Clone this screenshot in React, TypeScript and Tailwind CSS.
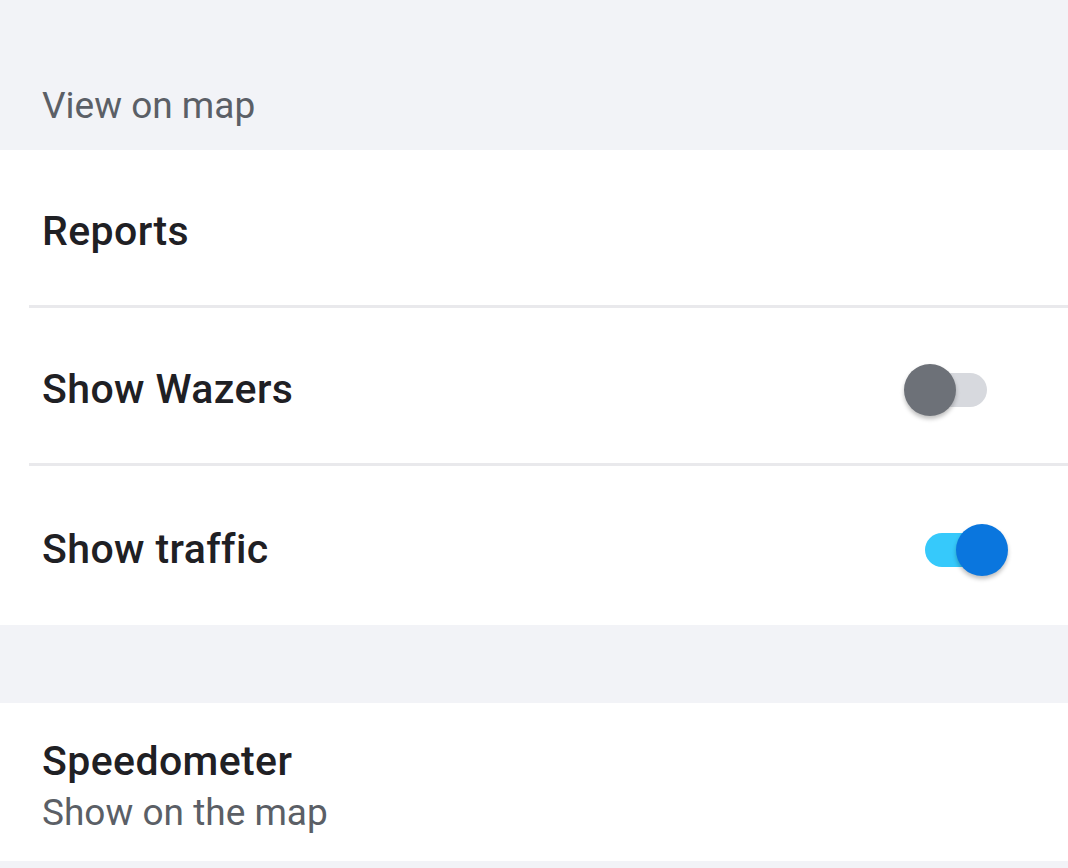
const Toggle = ({ on }: { on: boolean }) => {
  return (
    <div className="relative w-[62px] h-[34px]">
      <div className={`absolute inset-0 rounded-full ${on ? "bg-[#36c9fb]" : "bg-[#d7d9de]"}`}></div>
      <div
        className={`absolute top-[-9px] w-[52px] h-[52px] rounded-full shadow-[0_3px_4px_rgba(0,0,0,0.25)] ${
          on ? "left-[31px] bg-[#0a76de]" : "left-[-21px] bg-[#6d7178]"
        }`}
      ></div>
    </div>
  );
};

const Row = ({ title, toggle, h }: { title: string; toggle?: boolean; h: string }) => {
  return (
    <div className={`flex items-center justify-between pl-[42px] pr-[81px] pt-[9px] ${h}`}>
      <span className="text-[41px] font-medium text-[#1f2024] tracking-[0.4px]">{title}</span>
      {toggle !== undefined && <Toggle on={toggle} />}
    </div>
  );
};

const App = () => {
  return (
    <div
      className="w-[1068px] h-[868px] overflow-hidden bg-[#f2f3f7]"
      style={{ fontFamily: "Roboto, 'Noto Sans', sans-serif" }}
    >
      <div className="h-[150px] flex items-end pl-[42px] pb-[17px]">
        <span className="text-[37px] text-[#5b5f66]">View on map</span>
      </div>
      <div className="bg-white">
        <Row title="Reports" h="h-[155px]" />
        <div className="ml-[29px] h-[3px] bg-[#e9e9ec]"></div>
        <Row title="Show Wazers" toggle={false} h="h-[155px]" />
        <div className="ml-[29px] h-[3px] bg-[#e9e9ec]"></div>
        <Row title="Show traffic" toggle={true} h="h-[159px]" />
      </div>
      <div className="h-[78px]"></div>
      <div className="bg-white h-[158px] flex flex-col justify-center pl-[42px] pt-[10px]">
        <span className="text-[41px] font-medium text-[#1f2024] leading-[52px] tracking-[0.4px]">Speedometer</span>
        <span className="text-[37px] text-[#5b5f66] leading-[52px]">Show on the map</span>
      </div>
    </div>
  );
};

export default App;
